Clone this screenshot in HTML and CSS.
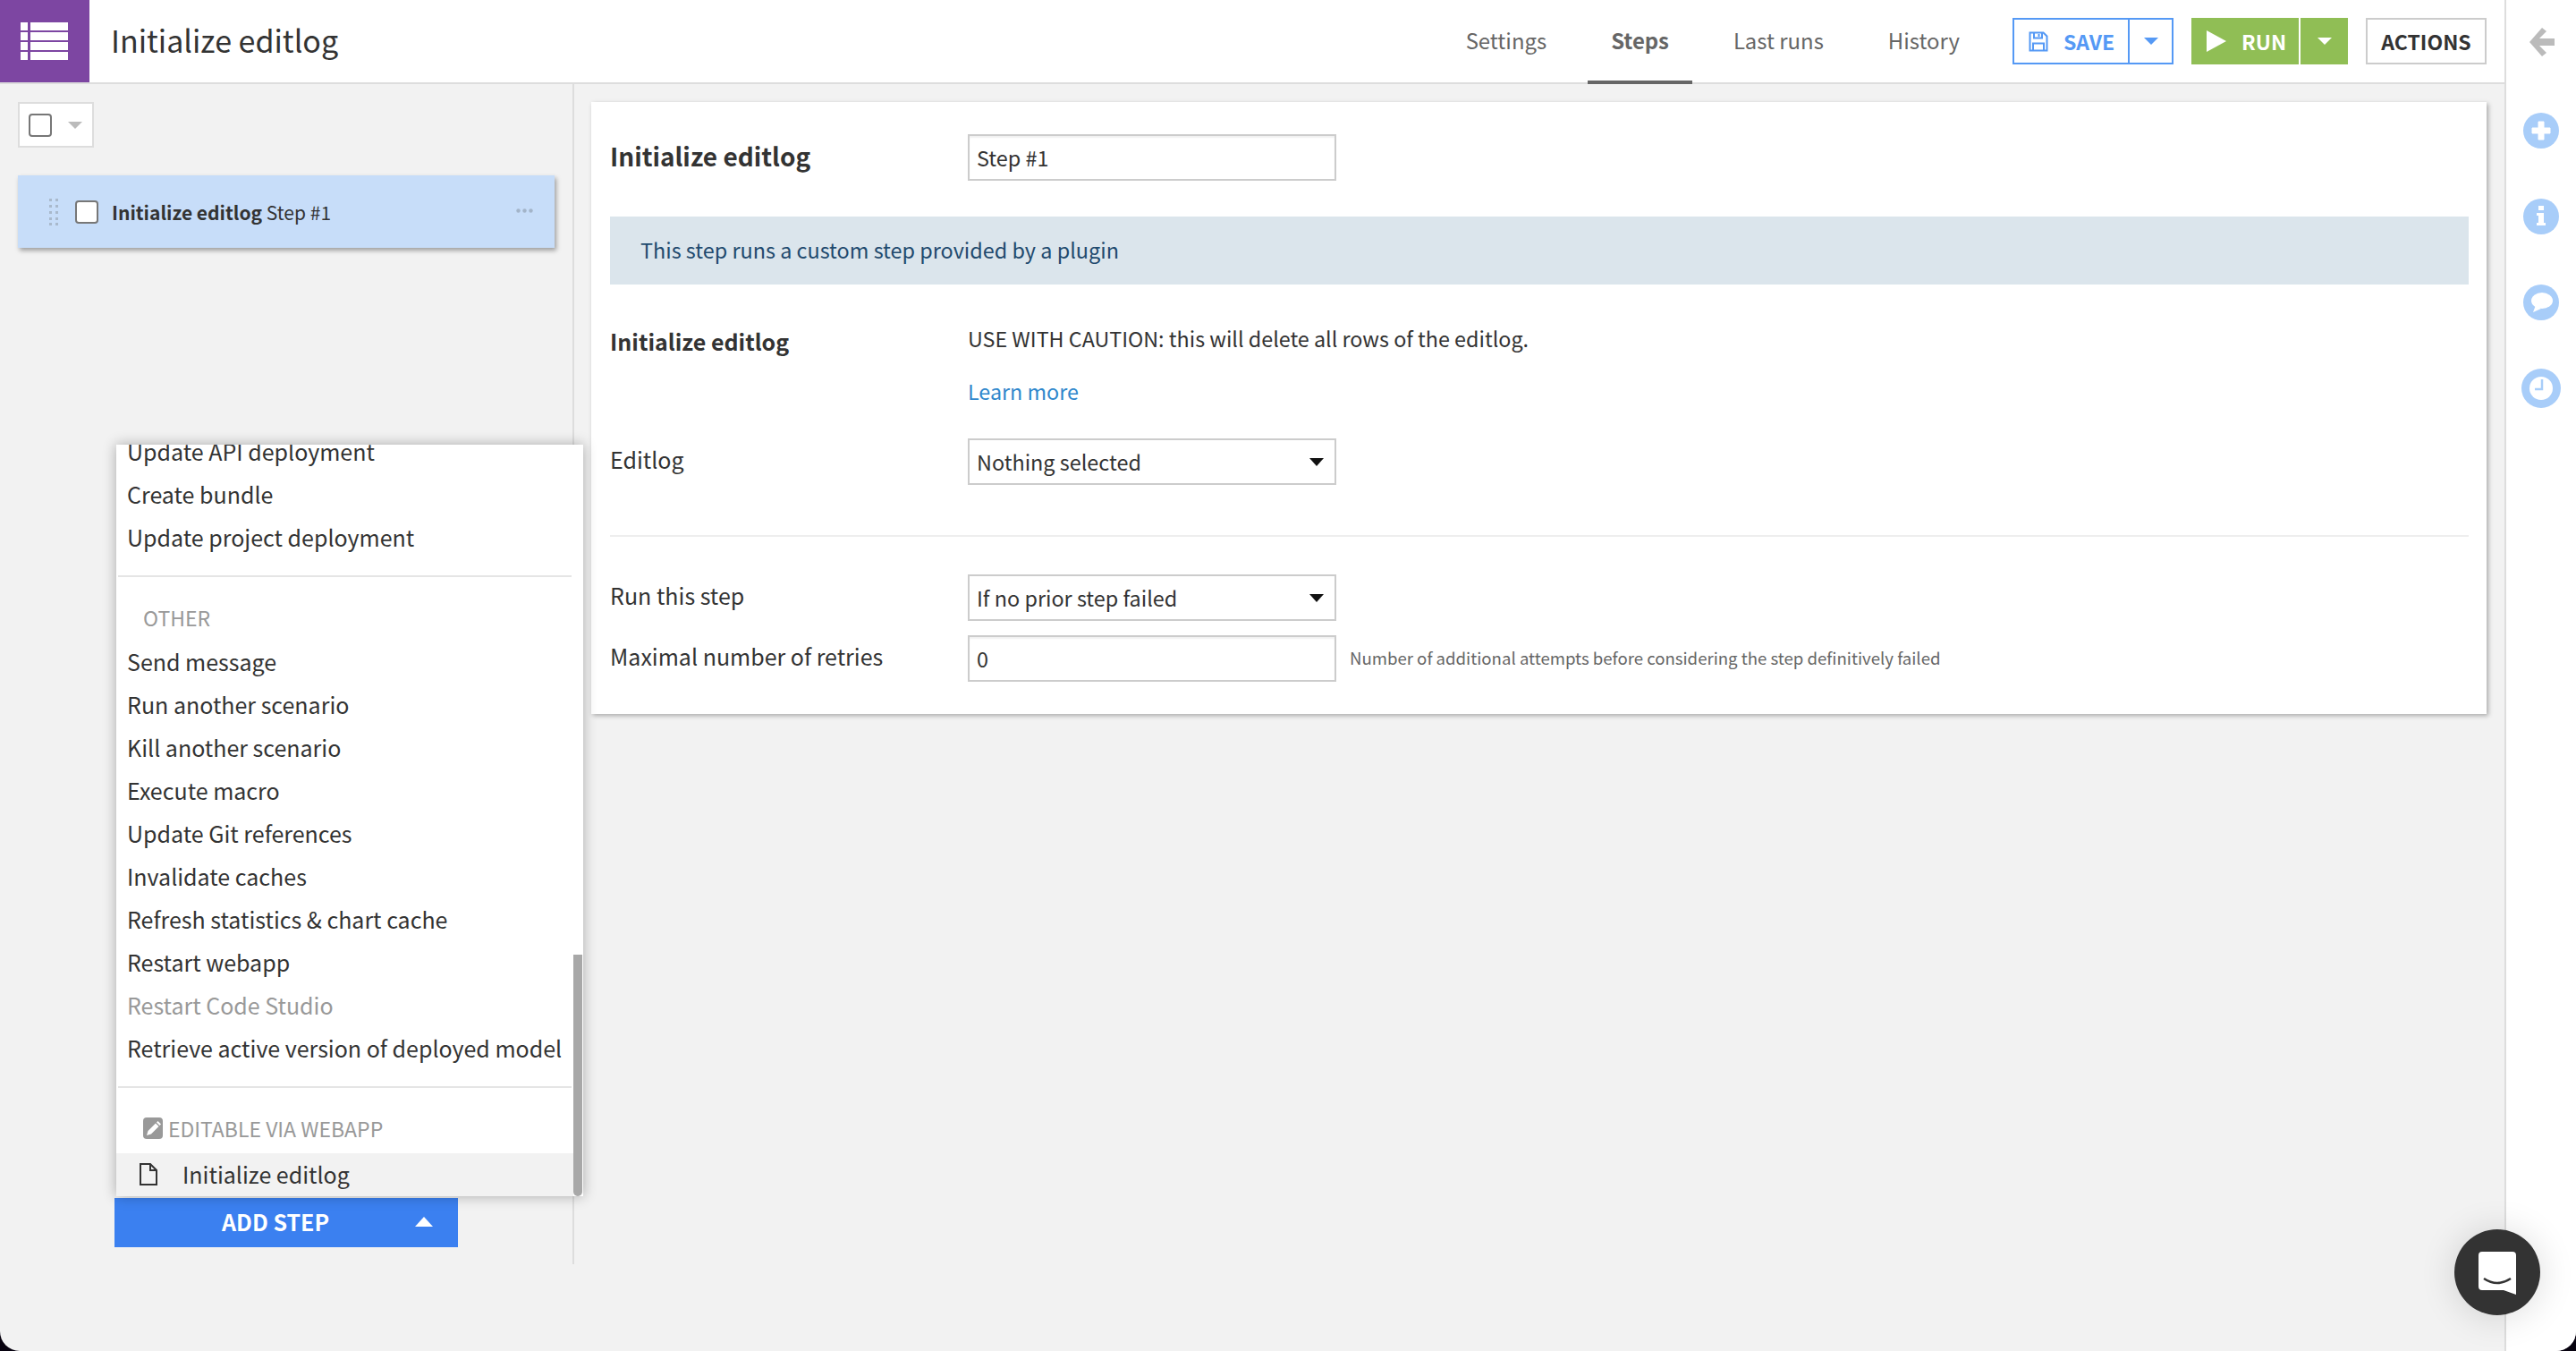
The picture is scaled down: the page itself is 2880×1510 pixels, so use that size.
FILE: index.html
```html
<!doctype html>
<html lang="en">
<head>
	<meta charset="utf-8">
	<title>Initialize editlog</title>
	<link rel="stylesheet" href="styles.css">
</head>
<body>
<div class="window">
	<div class="app">
		<header class="topbar">
			<div class="logo">
				<svg width="54" height="42" viewBox="0 0 54 42" fill="#fff"><rect x="0" y="0" width="8" height="9"/><rect x="11" y="0" width="42" height="9"/><rect x="0" y="11" width="8" height="9"/><rect x="11" y="11" width="42" height="9"/><rect x="0" y="22" width="8" height="9"/><rect x="11" y="22" width="42" height="9"/><rect x="0" y="33" width="8" height="9"/><rect x="11" y="33" width="42" height="9"/></svg>
			</div>
			<h1 class="title">Initialize editlog</h1>
			<nav class="tabs">
				<a class="tab">Settings</a>
				<a class="tab tab-active">Steps</a>
				<a class="tab">Last runs</a>
				<a class="tab">History</a>
			</nav>
			<div class="btn-group btn-save">
				<div class="btn-main">
					<svg width="22" height="23" viewBox="0 0 22 23" fill="none" stroke="#5599f5" stroke-width="2"><path d="M1.5 1.5h15l4 4v16h-19z"/><path d="M6 1.5v6h9v-6"/><path d="M5 21.5v-8h12v8"/><path d="M11.5 3v3" /></svg>
					<span>SAVE</span>
				</div>
				<div class="btn-caret"><i class="caret-down caret-blue"></i></div>
			</div>
			<div class="btn-group btn-run">
				<div class="btn-main">
					<svg width="22" height="24" viewBox="0 0 22 24" fill="#fff"><path d="M0 0l22 12L0 24z"/></svg>
					<span>RUN</span>
				</div>
				<div class="btn-caret"><i class="caret-down caret-white"></i></div>
			</div>
			<div class="btn-actions">ACTIONS</div>
		</header>

		<div class="content">
			<aside class="steps-panel">
				<div class="select-all">
					<span class="check"></span>
					<i class="caret-down caret-grey"></i>
				</div>
				<div class="step-card">
					<svg class="grip" width="10" height="30" viewBox="0 0 10 30" fill="#a9b9cc"><rect width="3" height="3" y="0"/><rect width="3" height="3" x="7" y="0"/><rect width="3" height="3" y="7"/><rect width="3" height="3" x="7" y="7"/><rect width="3" height="3" y="14"/><rect width="3" height="3" x="7" y="14"/><rect width="3" height="3" y="21"/><rect width="3" height="3" x="7" y="21"/><rect width="3" height="3" y="27"/><rect width="3" height="3" x="7" y="27"/></svg>
					<span class="check"></span>
					<span class="step-name"><b>Initialize editlog</b> Step #1</span>
					<svg class="step-more" width="19" height="5" viewBox="0 0 19 5" fill="#a3b4c9"><circle cx="2.5" cy="2.5" r="2.2"/><circle cx="9.5" cy="2.5" r="2.2"/><circle cx="16.5" cy="2.5" r="2.2"/></svg>
				</div>

				<div class="add-step-wrap">
					<div class="menu">
						<div class="menu-item">Update API deployment</div>
						<div class="menu-item">Create bundle</div>
						<div class="menu-item">Update project deployment</div>
						<div class="menu-sep"></div>
						<div class="menu-head">OTHER</div>
						<div class="menu-item">Send message</div>
						<div class="menu-item">Run another scenario</div>
						<div class="menu-item">Kill another scenario</div>
						<div class="menu-item">Execute macro</div>
						<div class="menu-item">Update Git references</div>
						<div class="menu-item">Invalidate caches</div>
						<div class="menu-item">Refresh statistics &amp; chart cache</div>
						<div class="menu-item">Restart webapp</div>
						<div class="menu-item menu-disabled">Restart Code Studio</div>
						<div class="menu-item">Retrieve active version of deployed model</div>
						<div class="menu-sep"></div>
						<div class="menu-head menu-head-icon">
							<svg width="22" height="24" viewBox="0 0 22 24"><rect width="22" height="24" rx="4" fill="#999"/><path d="M4 20l1.500-5L14 6.500l3.500 3.500L9 18.500z" fill="#fff"/><path d="M15 5.500l1.500-1.500 3.500 3.500-1.500 1.500z" fill="#fff"/></svg>
							EDITABLE VIA WEBAPP
						</div>
						<div class="menu-item menu-item-active">
							<svg width="20" height="25" viewBox="0 0 20 25" fill="none" stroke="#333" stroke-width="2"><path d="M1 1h11l7 7v16H1z"/><path d="M12 1v7h7"/></svg>
							Initialize editlog
						</div>
						<div class="menu-scroll"></div>
					</div>
					<div class="add-step">
						<span>ADD STEP</span>
						<i class="caret-up"></i>
					</div>
				</div>
			</aside>

			<main class="detail">
				<section class="card">
					<div class="row row-name">
						<div class="label label-title">Initialize editlog</div>
						<div class="field">Step #1</div>
					</div>
					<div class="banner">This step runs a custom step provided by a plugin</div>
					<div class="row row-plugin">
						<div class="label label-bold">Initialize editlog</div>
						<div class="plugin-desc">
							<div>USE WITH CAUTION: this will delete all rows of the editlog.</div>
							<a class="learn-more">Learn more</a>
						</div>
					</div>
					<div class="row row-editlog">
						<div class="label">Editlog</div>
						<div class="field field-select">Nothing selected<i class="caret-down caret-black"></i></div>
					</div>
					<hr class="sep">
					<div class="row row-run">
						<div class="label">Run this step</div>
						<div class="field field-select">If no prior step failed<i class="caret-down caret-black"></i></div>
					</div>
					<div class="row row-retries">
						<div class="label">Maximal number of retries</div>
						<div class="field">0</div>
						<div class="help">Number of additional attempts before considering the step definitively failed</div>
					</div>
				</section>
			</main>
		</div>
	</div>

	<aside class="rail">
		<svg class="rail-back" width="28" height="32" viewBox="0 0 28 32" fill="#bbb"><path d="M14 0l5 4-8 8h17v8H11l8 8-5 4L0 16z"/></svg>
		<svg class="rail-icon" width="40" height="40" viewBox="0 0 40 40"><circle cx="20" cy="20" r="20" fill="#a8cdf9"/><path d="M17 10h6v7h7v6h-7v7h-6v-7h-7v-6h7z" fill="#fff" stroke="#fff" stroke-linejoin="round"/></svg>
		<svg class="rail-icon" width="40" height="40" viewBox="0 0 40 40"><circle cx="20" cy="20" r="20" fill="#a8cdf9"/><path d="M17 8h6v5h-6zM15 16h8v11h2v3H15v-3h2v-8h-2z" fill="#fff"/></svg>
		<svg class="rail-icon" width="40" height="40" viewBox="0 0 40 40"><circle cx="20" cy="20" r="20" fill="#a8cdf9"/><ellipse cx="21" cy="18" rx="12" ry="9" fill="#fff"/><path d="M14 23l-3 8 9-4z" fill="#fff"/></svg>
		<svg class="rail-clock" width="44" height="44" viewBox="0 0 44 44"><circle cx="22" cy="22" r="22" fill="#a8cdf9"/><circle cx="22" cy="22" r="13" fill="#fff"/><path d="M23 12v11h-8" fill="none" stroke="#a8cdf9" stroke-width="2.500"/></svg>
	</aside>

	<div class="chat-bubble">
		<svg width="42" height="48" viewBox="0 0 42 48"><path d="M4 0h34a4 4 0 0 1 4 4v44l-14-5H4a4 4 0 0 1-4-4V4a4 4 0 0 1 4-4z" fill="#fff"/><path d="M6 30q15 10 30 0" fill="none" stroke="#333" stroke-width="2.500"/></svg>
	</div>
</div>
</body>
</html>
```

FILE: styles.css
```css
* {
	box-sizing: border-box;
}

html, body {
	margin: 0;
	height: 100%;
	background: #07020f;
}

body {
	font-family: "Noto Sans CJK SC", "Noto Sans", sans-serif;
	font-size: 25px;
	line-height: 32px;
	color: #333;
}

i {
	display: block;
}

b {
	font-weight: 600;
}

.window {
	position: relative;
	display: flex;
	height: 1510px;
	overflow: hidden;
	border-radius: 0 0 22px 22px;
	background: #f2f2f2;
}

.app {
	flex: 1;
	display: flex;
	flex-direction: column;
	min-width: 0;
}

/* top bar */
.topbar {
	display: flex;
	align-items: center;
	height: 94px;
	padding-right: 20px;
	background: #fff;
	border-bottom: 2px solid #ddd;
}

.logo {
	display: flex;
	align-items: center;
	justify-content: center;
	width: 100px;
	height: 92px;
	background: #7d46a2;
}

.title {
	flex: 1;
	margin: -2px 0 0 24px;
	font-size: 34px;
	font-weight: 400;
	line-height: 46px;
	color: #333;
}

.tabs {
	display: flex;
	align-self: stretch;
	gap: 20px;
	margin-right: 33px;
}

.tab {
	display: flex;
	align-items: center;
	padding: 0 26px;
	margin-bottom: -2px;
	font-size: 23.9px;
	color: #666;
	border-bottom: 4px solid transparent;
}

.tab-active {
	font-weight: 600;
	border-bottom-color: #666;
}

.btn-group {
	display: flex;
	height: 52px;
	font-size: 23px;
	font-weight: 600;
}

.btn-main {
	display: flex;
	align-items: center;
	gap: 17px;
}

.btn-caret {
	display: flex;
	align-items: center;
	justify-content: center;
}

.btn-save {
	width: 180px;
	margin-right: 20px;
	color: #5599f5;
	border: 2px solid #5599f5;
}

.btn-save .btn-main {
	width: 129px;
	padding-left: 16px;
	border-right: 2px solid #5599f5;
}

.btn-save .btn-caret {
	flex: 1;
}

.btn-run {
	width: 175px;
	margin-right: 20px;
	color: #fff;
	background: #90be55;
}

.btn-run .btn-main {
	width: 122px;
	padding-left: 17px;
	border-right: 2px solid #fff;
}

.btn-run .btn-caret {
	flex: 1;
}

.btn-actions {
	display: flex;
	align-items: center;
	justify-content: center;
	width: 135px;
	height: 52px;
	font-size: 23px;
	font-weight: 600;
	border: 2px solid #ccc;
}

.caret-down {
	width: 0;
	height: 0;
	border-left: 8px solid transparent;
	border-right: 8px solid transparent;
	border-top: 8px solid #000;
}

.caret-blue {
	border-top-color: #5599f5;
}

.caret-white {
	border-top-color: #fff;
}

.caret-grey {
	border-top-color: #bbb;
}

.caret-black {
	border-top: 9px solid #111;
}

.caret-up {
	width: 0;
	height: 0;
	border-left: 10px solid transparent;
	border-right: 10px solid transparent;
	border-bottom: 11px solid #fff;
}

/* left panel */
.content {
	flex: 1;
	display: flex;
	min-height: 0;
}

.steps-panel {
	display: flex;
	flex-direction: column;
	width: 642px;
	height: 1319px;
	padding: 20px 0 19px 20px;
	border-right: 2px solid #ddd;
}

.check {
	display: block;
	flex: none;
	width: 26px;
	height: 26px;
	background: #fff;
	border: 2px solid #777;
	border-radius: 4px;
}

.select-all {
	display: flex;
	align-items: center;
	gap: 18px;
	width: 85px;
	height: 51px;
	padding-left: 10px;
	background: #fff;
	border: 2px solid #ddd;
}

.step-card {
	display: flex;
	align-items: center;
	width: 600px;
	height: 81px;
	margin-top: 31px;
	padding-left: 35px;
	background: #c7ddf9;
	box-shadow: 2px 3px 5px rgba(0, 0, 0, 0.35);
}

.step-card .check {
	margin-left: 19px;
}

.step-name {
	flex: 1;
	margin-left: 15px;
	font-size: 21px;
	line-height: 28px;
}

.step-more {
	margin-right: 24px;
	margin-top: -2px;
}

.add-step-wrap {
	position: relative;
	margin-top: auto;
	margin-left: 108px;
	width: 384px;
}

.add-step {
	display: flex;
	align-items: center;
	height: 55px;
	padding: 0 0 3px 120px;
	font-size: 25px;
	font-weight: 600;
	color: #fff;
	background: #3b80f0;
}

.add-step .caret-up {
	margin-left: 96px;
}

/* menu opened over the panel */
.menu {
	position: absolute;
	left: 2px;
	bottom: 57px;
	display: flex;
	flex-direction: column;
	justify-content: flex-end;
	width: 522px;
	height: 840px;
	overflow: hidden;
	background: #fff;
	box-shadow: 0 0 14px rgba(0, 0, 0, 0.3);
}

.menu-item {
	flex: none;
	display: flex;
	align-items: center;
	height: 48px;
	padding: 0 0 2px 12px;
	font-size: 25px;
	color: #333;
}

.menu-disabled {
	color: #999;
}

.menu-item-active {
	gap: 28px;
	width: 511px;
	padding-left: 26px;
	background: #f2f2f2;
}

.menu-sep {
	flex: none;
	height: 2px;
	margin: 18px 13px 0 2px;
	background: #e5e5e5;
}

.menu-head {
	flex: none;
	display: flex;
	align-items: center;
	height: 48px;
	margin-top: 21px;
	padding-left: 30px;
	font-size: 23px;
	color: #999;
}

.menu-head + .menu-item {
	margin-top: 2px;
}

.menu-head-icon {
	gap: 6px;
	margin-bottom: 4px;
}

.menu-head-icon + .menu-item {
	margin-top: 0;
}

.menu-scroll {
	position: absolute;
	top: 570px;
	right: 1px;
	bottom: 0;
	width: 10px;
	background: #a8a8a8;
	border-radius: 0 0 5px 5px;
}

/* right side */
.detail {
	flex: 1;
	padding: 20px 20px 0 19px;
	min-width: 0;
}

.card {
	height: 684px;
	padding: 36px 20px 0 21px;
	background: #fff;
	box-shadow: 2px 2px 5px rgba(0, 0, 0, 0.3);
}

.row {
	display: flex;
	align-items: center;
}

.label {
	flex: none;
	width: 400px;
	margin-top: -6px;
	font-size: 25px;
	color: #333;
}

.label-title {
	font-size: 28px;
	font-weight: 600;
	line-height: 36px;
	margin-top: -5px;
}

.label-bold {
	font-weight: 600;
}

.field {
	position: relative;
	flex: none;
	display: flex;
	align-items: center;
	width: 412px;
	height: 52px;
	padding: 0 8px;
	font-size: 23.4px;
	background: #fff;
	border: 2px solid #ccc;
	box-shadow: inset 0 2px 2px rgba(0, 0, 0, 0.06);
}

.field-select {
	justify-content: space-between;
	padding-right: 12px;
	box-shadow: none;
}

.banner {
	height: 76px;
	margin-top: 40px;
	padding: 21px 34px 0;
	font-size: 23.4px;
	color: #1f4a6e;
	background: #dbe5ec;
}

.row-plugin {
	align-items: flex-start;
	margin-top: 44px;
}

.row-plugin .label {
	margin-top: 3px;
}

.plugin-desc {
	font-size: 23.3px;
}

.learn-more {
	display: block;
	margin-top: 27px;
	color: #2f87cc;
}

.row-editlog {
	margin-top: 37px;
}

.sep {
	height: 2px;
	margin: 56px 0 0;
	background: #eee;
	border: 0;
}

.row-run {
	margin-top: 42px;
}

.row-retries {
	margin-top: 16px;
}

.help {
	margin-left: 15px;
	margin-top: -2px;
	font-size: 18.6px;
	color: #666;
}

/* right rail */
.rail {
	flex: none;
	display: flex;
	flex-direction: column;
	align-items: center;
	width: 80px;
	background: #fff;
	border-left: 2px solid #ddd;
	padding-top: 31px;
}

.rail-back {
	margin-left: 2px;
	margin-bottom: 63px;
}

.rail-icon {
	margin-bottom: 56px;
}

.rail-clock {
	margin-top: -2px;
}

.chat-bubble {
	position: absolute;
	left: 2744px;
	top: 1374px;
	display: flex;
	align-items: center;
	justify-content: center;
	width: 96px;
	height: 96px;
	padding-top: 1px;
	background: #333;
	border-radius: 50%;
	box-shadow: 0 2px 40px rgba(0, 0, 0, 0.14);
}
```
